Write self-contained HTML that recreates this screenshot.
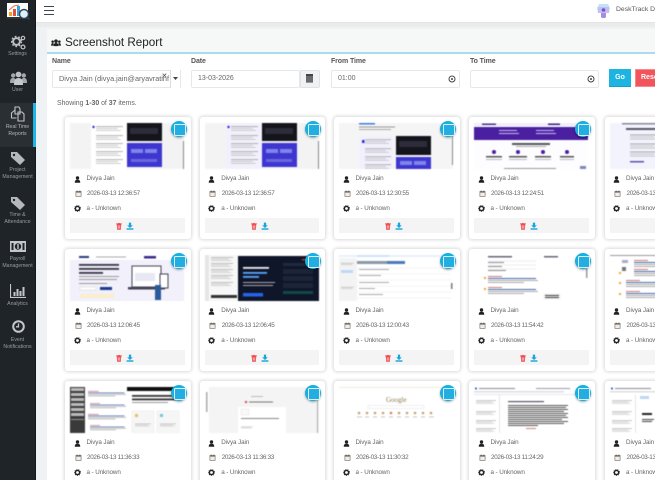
<!DOCTYPE html>
<html><head><meta charset="utf-8"><title>Screenshot Report</title>
<style>
*{box-sizing:border-box}
html,body{margin:0;padding:0;width:655px;height:480px;overflow:hidden;background:#eef2f4;font-family:"Liberation Sans",sans-serif;color:#555}
#root{position:absolute;left:0;top:0;width:655px;height:480px;overflow:hidden;background:#eef2f4;filter:blur(.3px)}
.a{position:absolute}
#side{left:0;top:0;width:36px;height:480px;background:#1f2429;border-right:1px solid #14181b}
.nav{position:absolute;left:0;width:35px;text-align:center;color:#989ca0;font-size:5.2px;line-height:7.4px}
.nav svg{position:absolute}
.nav span{position:absolute;left:0;width:35px;text-align:center}
#hdr{left:36px;top:0;width:619px;height:23px;background:#fff;border-bottom:1px solid #e4e6e6}
#band{left:36px;top:23px;width:619px;height:4px;background:#eaecec}
#main{left:47px;top:29px;width:608px;height:451px;background:#fff}
#ch{left:47px;top:29px;width:608px;height:25px;background:#f6f7f7;border-bottom:2px solid #a9dded}
#title{left:65px;top:35px;font-size:11.7px;line-height:16px;color:#222;font-weight:400;white-space:nowrap}
.lbl{font-size:7px;line-height:10px;top:57px;color:#555;font-weight:700;white-space:nowrap;letter-spacing:-.1px}
.in{top:70px;height:18px;background:#fff;border:1px solid #e4e8ec;border-radius:2px;font-size:7px;line-height:16px;color:#666;padding-left:6px;white-space:nowrap;overflow:hidden}
.card{position:absolute;width:125.5px;height:122px;background:#fff;border-radius:3px;box-shadow:0 0 3px 1px rgba(0,0,0,.15)}
.card>svg.t{position:absolute;left:5px;top:6px;width:114px;height:46px;background:#fff;filter:blur(.45px)}
.ck{position:absolute;left:105.5px;top:4px;width:16px;height:16px;border-radius:50%;background:#18b0de;box-shadow:0 1px 2px rgba(0,0,0,.35)}
.ck:after{content:"";position:absolute;left:3px;top:3px;width:10px;height:10px;border:1px solid #d8f0f8;border-radius:1.5px;background:#22aee0}
.tx{position:absolute;left:21.5px;font-size:6.3px;line-height:9px;color:#666;white-space:nowrap;letter-spacing:-.1px}
.dt{letter-spacing:-.3px}
.ic{position:absolute;left:8.5px;width:7px;height:7px}
.ft{position:absolute;left:5px;top:101px;width:114.5px;height:15px;background:#f4f4f4}
.ft svg{position:absolute;top:3.5px;width:8px;height:8px}
</style></head><body>
<div id="root">
<svg width="0" height="0" style="position:absolute">
<symbol id="u" viewBox="0 0 14 14"><circle cx="7" cy="4" r="3.4" fill="#222"/><path d="M1.5 13.5c0-5 2-6 5.500-6s5.500 1 5.500 6z" fill="#222"/></symbol>
<symbol id="c" viewBox="0 0 14 14"><rect x="1" y="2" width="12" height="11.500" rx="1" fill="#8a8078"/><rect x="2.500" y="5.500" width="9" height="6.500" fill="#f1eee9"/><rect x="3.500" y="1" width="1.500" height="3" fill="#555"/><rect x="9" y="1" width="1.500" height="3" fill="#555"/></symbol>
<symbol id="g" viewBox="0 0 14 14"><circle cx="7" cy="7" r="4.200" fill="none" stroke="#222" stroke-width="2.800"/><circle cx="7" cy="7" r="6" fill="none" stroke="#222" stroke-width="1.600" stroke-dasharray="2 2.200"/></symbol>
<symbol id="d" viewBox="0 0 14 14"><path d="M3 4h8l-.8 9.500H3.800zM2 2.500h3.500l.5-1h2l.5 1H12V4H2z" fill="#ee4b52"/><path d="M5.500 6v5.500M8.500 6v5.500" stroke="#fff" stroke-width="1"/></symbol>
<symbol id="s" viewBox="0 0 14 14"><path d="M5 1h4v5h3L7 10.500 2 6h3z" fill="#17a5dc"/><rect x="1" y="11" width="12" height="2.500" fill="#17a5dc"/></symbol>
<symbol id="l" viewBox="0 0 36 6"><rect width="36" height="1" fill="#999"/><rect y="2.500" width="29" height="1" fill="#bbb"/><rect y="5" width="33" height="1" fill="#bbb"/></symbol>
<symbol id="r" viewBox="0 0 50 8"><rect width="14" height="1" fill="#c77"/><rect y="2" width="48" height="1" fill="#46a"/><rect y="4" width="50" height="1" fill="#aaa"/><rect y="6" width="36" height="1" fill="#aaa"/></symbol>
</svg>

<div id="hdr" class="a"></div><div id="band" class="a"></div>
<div id="main" class="a"></div><div id="ch" class="a"></div>

<div id="side" class="a">
 <svg class="a" style="left:6px;top:2px" width="24" height="19" viewBox="0 0 24 19"><rect x="1" y="1" width="21" height="15" fill="#fff"/><rect x="1" y="15" width="21" height="2" fill="#333"/><rect x="3" y="10" width="3" height="4" fill="#f4a12a"/><rect x="7" y="7" width="3" height="7" fill="#e8503a"/><rect x="11" y="4" width="3" height="10" fill="#3aa0e0"/><path d="M3 8l5-4 5-1" stroke="#e8703a" fill="none"/><circle cx="18" cy="12" r="4.500" fill="#dff3fb" stroke="#345" stroke-width="1.400"/><path d="M21 15l2.500 2.500" stroke="#345" stroke-width="1.500"/></svg>
 <div class="a" style="left:0;top:103px;width:35px;height:44px;background:#2a2f34"></div>
 <div class="a" style="left:33px;top:103px;width:2.500px;height:44px;background:#1fb5e6"></div>

 <div class="nav" style="top:33px;height:30px"><svg style="left:11px;top:2px" width="15" height="15" viewBox="0 0 15 15"><circle cx="5.500" cy="6.500" r="3.400" fill="none" stroke="#bdc0c3" stroke-width="2"/><circle cx="5.500" cy="6.500" r="5" fill="none" stroke="#bdc0c3" stroke-width="1.400" stroke-dasharray="1.800 1.800"/><circle cx="12" cy="3" r="1.700" fill="none" stroke="#bdc0c3" stroke-width="1.200"/><circle cx="12" cy="12" r="1.900" fill="none" stroke="#bdc0c3" stroke-width="1.300"/></svg><span style="top:18px">Settings</span></div>
 <div class="nav" style="top:68px;height:30px"><svg style="left:10px;top:3px" width="17" height="14" viewBox="0 0 17 14"><circle cx="8.500" cy="3.500" r="2.900" fill="#bdc0c3"/><circle cx="3.200" cy="4.500" r="2.200" fill="#a6a9ac"/><circle cx="13.800" cy="4.500" r="2.200" fill="#a6a9ac"/><path d="M0 12c0-4 1-5 3-5s3 1 3 5zM11 12c0-4 1-5 3-5s3 1 3 5z" fill="#a6a9ac"/><path d="M4 14c0-5 1.500-7 4.500-7s4.500 2 4.500 7z" fill="#c6c9cb"/></svg><span style="top:19px">User</span></div>
 <div class="nav" style="top:103px;height:44px"><svg style="left:10px;top:3px" width="15" height="16" viewBox="0 0 15 16"><path d="M5 1h4l1 2v5H5zM5 4L1.500 7v5h5" fill="none" stroke="#c0c3c6" stroke-width="1.100"/><path d="M8 6h4l2 2v7H8z" fill="none" stroke="#c0c3c6" stroke-width="1.100"/></svg><span style="top:21px;color:#b5b8bb">Real Time<br>Reports</span></div>
 <div class="nav" style="top:149px;height:34px"><svg style="left:10px;top:2px" width="16" height="15" viewBox="0 0 16 15"><path d="M1 1h6l8 8-5 5-9-8z" fill="#b6b9bc"/><circle cx="4" cy="4" r="1.200" fill="#1f2429"/></svg><span style="top:18px">Project<br>Management</span></div>
 <div class="nav" style="top:194px;height:34px"><svg style="left:10px;top:2px" width="16" height="15" viewBox="0 0 16 15"><path d="M1 1h6l8 8-5 5-9-8z" fill="#b6b9bc"/><circle cx="4" cy="4" r="1.200" fill="#1f2429"/></svg><span style="top:18px">Time &amp;<br>Attendance</span></div>
 <div class="nav" style="top:238px;height:34px"><svg style="left:10px;top:3px" width="16" height="12" viewBox="0 0 16 12"><rect width="16" height="11" fill="#c4c7c9"/><circle cx="8" cy="5.500" r="3.200" fill="#1f2429"/><rect x="7.300" y="3" width="1.400" height="5" fill="#c4c7c9"/><rect x="1.500" y="2" width="2" height="7" fill="#1f2429"/><rect x="12.500" y="2" width="2" height="7" fill="#1f2429"/></svg><span style="top:18px">Payroll<br>Management</span></div>
 <div class="nav" style="top:284px;height:24px"><svg style="left:10px;top:0" width="16" height="14" viewBox="0 0 16 14"><path d="M.5 0v13.500H16" fill="none" stroke="#c4c7c9" stroke-width="1.200"/><rect x="3.500" y="8" width="2" height="4" fill="#c4c7c9"/><rect x="6.500" y="5" width="2" height="7" fill="#c4c7c9"/><rect x="9.500" y="7" width="2" height="5" fill="#c4c7c9"/><rect x="12.500" y="3" width="2" height="9" fill="#c4c7c9"/></svg><span style="top:17px">Analytics</span></div>
 <div class="nav" style="top:320px;height:34px"><svg style="left:11.500px;top:0" width="13" height="13" viewBox="0 0 13 13"><circle cx="6.500" cy="6.500" r="5.300" fill="none" stroke="#c4c7c9" stroke-width="2"/><path d="M6.500 3.500v3.300H4" fill="none" stroke="#c4c7c9" stroke-width="1.300"/></svg><span style="top:16.500px">Event<br>Notifications</span></div>
</div>

<div class="a" style="left:44px;top:6px;width:9.500px;height:9px;border-top:1.800px solid #3c4650;border-bottom:1.800px solid #3c4650"></div>
<div class="a" style="left:44px;top:9.600px;width:9.500px;height:1.800px;background:#3c4650"></div>

<svg class="a" style="left:596px;top:2px" width="15" height="17" viewBox="0 0 15 17"><path d="M3 2h9l2 4-1 5H2L1 6z" fill="#bfe3f7"/><rect x="2" y="5" width="11" height="6" fill="#c9bdf0"/><path d="M5 11h5v4l-1 1H6l-1-1z" fill="#a78be8"/><circle cx="7.500" cy="8" r="1.800" fill="#6a55d8"/></svg>
<div class="a" style="left:616px;top:5px;font-size:6.8px;line-height:10px;color:#555;white-space:nowrap">DeskTrack Demo</div>

<svg class="a" style="left:51px;top:38px" width="10" height="9" viewBox="0 0 11 9"><circle cx="5.500" cy="3" r="2" fill="#222"/><circle cx="1.800" cy="3.500" r="1.400" fill="#222"/><circle cx="9.200" cy="3.500" r="1.400" fill="#222"/><path d="M0 8c0-2 1-3 2-3s1 1 1 3zM8 8c0-2 0-3 1-3s2 1 2 3zM3 8.500c0-3 1-3.500 2.500-3.500S8 5.500 8 8.500z" fill="#222"/></svg>
<div id="title" class="a">Screenshot Report</div>

<div class="a lbl" style="left:52px">Name</div>
<div class="a lbl" style="left:191px">Date</div>
<div class="a lbl" style="left:331px">From Time</div>
<div class="a lbl" style="left:470px">To Time</div>

<div class="a in" style="left:52px;width:129px;font-size:7.3px">Divya Jain (divya.jain@aryavratinf</div>
<div class="a" style="left:161.500px;top:73px;font-size:7px;line-height:8px;color:#444">&#10005;</div>
<div class="a" style="left:169.500px;top:70px;width:11px;height:18px;background:#fff;border-left:1px solid #d8dce0"></div>
<div class="a" style="left:180px;top:70px;width:1px;height:18px;background:#e4e8ec"></div>
<svg class="a" style="left:173px;top:77px" width="5" height="3"><path d="M0 0h5L2.500 3z" fill="#444"/></svg>

<div class="a in" style="left:191px;width:109px">13-03-2026</div>
<div class="a" style="left:300px;top:70px;width:20px;height:18px;background:#f0f1f2;border:1px solid #e0e2e4;border-radius:0 2px 2px 0"></div>
<svg class="a" style="left:306px;top:74px" width="7" height="9"><rect width="7" height="8.500" fill="#444"/><path d="M0 3h7M0 5h7M0 7h7" stroke="#ddd" stroke-width=".6"/></svg>

<div class="a in" style="left:331px;width:129px">01:00</div>
<svg class="a" style="left:448px;top:74.500px" width="8" height="8" viewBox="0 0 8 8"><circle cx="4" cy="4" r="3" fill="none" stroke="#444" stroke-width="1"/><circle cx="4" cy="4" r="1" fill="#444"/></svg>
<div class="a in" style="left:470px;width:129px"></div>
<svg class="a" style="left:587px;top:74.500px" width="8" height="8" viewBox="0 0 8 8"><circle cx="4" cy="4" r="3" fill="none" stroke="#444" stroke-width="1"/><circle cx="4" cy="4" r="1" fill="#444"/></svg>

<div class="a" style="left:609px;top:69px;width:22px;height:18px;background:#1eb4e2;border-bottom:1px solid #18a0ca;color:#fff;font-size:7px;line-height:17px;text-align:center;font-weight:700">Go</div>
<div class="a" style="left:635px;top:69px;width:30px;height:18px;background:#f2545b;border:1px solid #f78a8f;color:#fff;font-size:7px;line-height:16px;padding-left:5px;font-weight:700;white-space:nowrap">Reset</div>

<div class="a" style="left:57px;top:99px;font-size:6.900px;line-height:10px;color:#666;white-space:nowrap">Showing <b>1-30</b> of <b>37</b> items.</div>

<!-- ROW 1 -->
<div class="card" style="left:65px;top:117px"><svg class="t" viewBox="0 0 114 46"><rect width="114" height="46" fill="#f3f3f3"/><rect x="21" width="36" height="46" fill="#fff"/><rect x="57" y="0" width="35" height="18" fill="#14141c"/><rect x="57" y="20" width="35" height="24" fill="#3f36d0"/><rect x="60" y="5" width="28" height="6" fill="#2c2c3a"/><rect x="61" y="26" width="12" height="4" fill="#7e86ea"/><rect x="75" y="26" width="12" height="4" fill="#7e86ea"/><rect x="61" y="36" width="26" height="3" fill="#6a66e0"/><circle cx="23.500" cy="4" r="1.200" fill="#2a2ae0"/><use href="#l" x="26" y="3" width="27" height="5"/><use href="#l" x="26" y="12" width="27" height="5"/><use href="#l" x="26" y="20" width="27" height="5"/><use href="#l" x="26" y="28" width="27" height="5"/><use href="#l" x="26" y="36" width="27" height="5"/><rect x="113" y="18" width="1" height="28" fill="#888"/></svg><div class="ck"></div>
<svg class="ic" style="top:58.500px"><use href="#u" width="7" height="7"/></svg><div class="tx" style="top:57px">Divya Jain</div>
<svg class="ic" style="top:73px;left:9.500px"><use href="#c" width="7" height="7"/></svg><div class="tx dt" style="top:72px;left:22px">2026-03-13 12:36:57</div>
<svg class="ic" style="top:87.500px"><use href="#g" width="7" height="7"/></svg><div class="tx" style="top:87px">a - Unknown</div>
<div class="ft"><svg style="left:45px"><use href="#d" width="8" height="8"/></svg><svg style="left:56px"><use href="#s" width="8" height="8"/></svg></div></div>

<div class="card" style="left:199.700px;top:117px"><svg class="t" viewBox="0 0 114 46"><rect width="114" height="46" fill="#f3f3f3"/><rect x="21" width="36" height="46" fill="#f3f0fd"/><rect x="57" y="0" width="35" height="18" fill="#14141c"/><rect x="57" y="20" width="35" height="24" fill="#3f36d0"/><rect x="60" y="5" width="28" height="6" fill="#2c2c3a"/><rect x="61" y="26" width="12" height="4" fill="#7e86ea"/><rect x="75" y="26" width="12" height="4" fill="#7e86ea"/><rect x="61" y="36" width="26" height="3" fill="#6a66e0"/><circle cx="23.500" cy="4" r="1.200" fill="#2a2ae0"/><use href="#l" x="26" y="3" width="27" height="5"/><use href="#l" x="26" y="12" width="27" height="5"/><use href="#l" x="26" y="20" width="27" height="5"/><use href="#l" x="26" y="28" width="27" height="5"/><use href="#l" x="26" y="36" width="27" height="5"/><rect x="113" y="18" width="1" height="28" fill="#888"/></svg><div class="ck"></div>
<svg class="ic" style="top:58.500px"><use href="#u" width="7" height="7"/></svg><div class="tx" style="top:57px">Divya Jain</div>
<svg class="ic" style="top:73px;left:9.500px"><use href="#c" width="7" height="7"/></svg><div class="tx dt" style="top:72px;left:22px">2026-03-13 12:36:57</div>
<svg class="ic" style="top:87.500px"><use href="#g" width="7" height="7"/></svg><div class="tx" style="top:87px">a - Unknown</div>
<div class="ft"><svg style="left:45px"><use href="#d" width="8" height="8"/></svg><svg style="left:56px"><use href="#s" width="8" height="8"/></svg></div></div>

<div class="card" style="left:334px;top:117px"><svg class="t" viewBox="0 0 114 46"><rect width="114" height="46" fill="#f5f5f5"/><rect x="20" y="0" width="16" height="1.500" fill="#3a7ae0"/><rect x="20" y="3.500" width="36" height="1" fill="#999"/><rect x="20" y="6" width="32" height="1" fill="#aaa"/><rect x="20" y="13" width="34" height="33" fill="#f3f0fd"/><rect x="57" y="13" width="35" height="19" fill="#14141c"/><rect x="57" y="34" width="35" height="12" fill="#3f36d0"/><rect x="61" y="38" width="12" height="4" fill="#7e86ea"/><rect x="75" y="38" width="12" height="4" fill="#7e86ea"/><rect x="60" y="18" width="28" height="6" fill="#2c2c3a"/><rect x="23" y="17" width="2.500" height="3" fill="#2a2ae0"/><use href="#l" x="26" y="16" width="26" height="5"/><use href="#l" x="26" y="25" width="26" height="5"/><use href="#l" x="26" y="33" width="26" height="5"/><use href="#l" x="26" y="41" width="26" height="5"/><rect x="113" y="12" width="1" height="30" fill="#888"/></svg><div class="ck"></div>
<svg class="ic" style="top:58.500px"><use href="#u" width="7" height="7"/></svg><div class="tx" style="top:57px">Divya Jain</div>
<svg class="ic" style="top:73px;left:9.500px"><use href="#c" width="7" height="7"/></svg><div class="tx dt" style="top:72px;left:22px">2026-03-13 12:30:55</div>
<svg class="ic" style="top:87.500px"><use href="#g" width="7" height="7"/></svg><div class="tx" style="top:87px">a - Unknown</div>
<div class="ft"><svg style="left:45px"><use href="#d" width="8" height="8"/></svg><svg style="left:56px"><use href="#s" width="8" height="8"/></svg></div></div>

<div class="card" style="left:469px;top:117px"><svg class="t" viewBox="0 0 114 46"><rect width="114" height="46" fill="#fdfdff"/><rect width="114" height="3" fill="#f0eef8"/><rect x="8" y="0.500" width="14" height="1.500" fill="#443388"/><rect x="74" y="0.500" width="12" height="1.500" fill="#3a1c8c"/><rect y="4" width="114" height="13" fill="#4a1fa0"/><rect x="25" y="7" width="18" height="1" fill="#cbbdf0"/><rect x="25" y="10" width="20" height="1" fill="#cbbdf0"/><rect x="62" y="7" width="18" height="1" fill="#cbbdf0"/><rect x="62" y="10" width="20" height="1" fill="#cbbdf0"/><rect x="38" y="20" width="38" height="2" fill="#555"/><rect x="42" y="23" width="30" height="1" fill="#aaa"/><circle cx="20" cy="29" r="2" fill="#4a1fa0"/><circle cx="44" cy="29" r="2" fill="#4a1fa0"/><circle cx="69" cy="29" r="2" fill="#4a1fa0"/><circle cx="93" cy="29" r="2" fill="#4a1fa0"/><rect x="12" y="33" width="16" height="1.500" fill="#555"/><rect x="35" y="33" width="18" height="1.500" fill="#555"/><rect x="61" y="33" width="16" height="1.500" fill="#555"/><rect x="86" y="33" width="14" height="1.500" fill="#555"/><rect x="12" y="36" width="16" height="1" fill="#bbb"/><rect x="35" y="36" width="18" height="1" fill="#bbb"/><rect x="61" y="36" width="16" height="1" fill="#bbb"/><rect x="86" y="36" width="14" height="1" fill="#bbb"/><rect x="30" y="45" width="52" height="1" fill="#999"/><rect x="106" y="43" width="6" height="3" fill="#7a88bb"/></svg><div class="ck"></div>
<svg class="ic" style="top:58.500px"><use href="#u" width="7" height="7"/></svg><div class="tx" style="top:57px">Divya Jain</div>
<svg class="ic" style="top:73px;left:9.500px"><use href="#c" width="7" height="7"/></svg><div class="tx dt" style="top:72px;left:22px">2026-03-13 12:24:51</div>
<svg class="ic" style="top:87.500px"><use href="#g" width="7" height="7"/></svg><div class="tx" style="top:87px">a - Unknown</div>
<div class="ft"><svg style="left:45px"><use href="#d" width="8" height="8"/></svg><svg style="left:56px"><use href="#s" width="8" height="8"/></svg></div></div>

<div class="card" style="left:604.500px;top:117px"><svg class="t" viewBox="0 0 114 46"><rect width="114" height="46" fill="#f3f3fd"/><rect x="12" y="0" width="34" height="1.500" fill="#889"/><rect x="16" y="5" width="30" height="2" fill="#556"/><use href="#l" x="20" y="11" width="30" height="6"/><use href="#l" x="20" y="20" width="30" height="6"/><use href="#l" x="20" y="28" width="30" height="6"/><rect x="20" y="38" width="14" height="1.500" fill="#55a"/></svg>
<svg class="ic" style="top:58.500px"><use href="#u" width="7" height="7"/></svg><div class="tx" style="top:57px">Divya Jain</div>
<svg class="ic" style="top:73px;left:9.500px"><use href="#c" width="7" height="7"/></svg><div class="tx dt" style="top:72px;left:22px">2026-03-13 12:18:49</div>
<svg class="ic" style="top:87.500px"><use href="#g" width="7" height="7"/></svg><div class="tx" style="top:87px">a - Unknown</div>
<div class="ft"></div></div>

<!-- ROW 2 -->
<div class="card" style="left:65px;top:249px"><svg class="t" viewBox="0 0 114 46"><rect width="114" height="46" fill="#f1f0fb"/><rect width="114" height="5" fill="#fff"/><rect x="9" y="1" width="10" height="2" fill="#2a3a80"/><rect x="26" y="1.500" width="30" height="1" fill="#aaa"/><rect x="74" y="1" width="12" height="2.500" fill="#3a2a8c"/><rect x="9" y="9" width="40" height="1.800" fill="#334"/><rect x="9" y="13" width="40" height="1.800" fill="#334"/><rect x="9" y="17" width="24" height="1.800" fill="#334"/><rect x="9" y="21" width="40" height="1" fill="#999"/><rect x="9" y="24" width="38" height="1" fill="#999"/><rect x="9" y="28" width="28" height="1" fill="#999"/><rect x="10" y="32" width="16" height="3" fill="#fff" stroke="#ccc" stroke-width=".4"/><rect x="30" y="32" width="12" height="3" fill="#1c3a8c"/><rect x="10" y="39" width="34" height="4" fill="#fbeecb"/><rect x="62" y="11" width="29" height="21" fill="#fff" stroke="#445" stroke-width="1"/><rect x="58" y="32" width="37" height="2.500" fill="#445"/><rect x="65" y="18" width="20" height="8" fill="#e8e8f4"/><rect x="90" y="19" width="8" height="14" fill="#fff" stroke="#445"/><rect x="85" y="30" width="6" height="15" fill="#2a5a9c"/></svg><div class="ck"></div>
<svg class="ic" style="top:58.500px"><use href="#u" width="7" height="7"/></svg><div class="tx" style="top:57px">Divya Jain</div>
<svg class="ic" style="top:73px;left:9.500px"><use href="#c" width="7" height="7"/></svg><div class="tx dt" style="top:72px;left:22px">2026-03-13 12:06:45</div>
<svg class="ic" style="top:87.500px"><use href="#g" width="7" height="7"/></svg><div class="tx" style="top:87px">a - Unknown</div>
<div class="ft"><svg style="left:45px"><use href="#d" width="8" height="8"/></svg><svg style="left:56px"><use href="#s" width="8" height="8"/></svg></div></div>

<div class="card" style="left:199.700px;top:249px"><svg class="t" viewBox="0 0 114 46"><rect width="114" height="46" fill="#f7f7f7"/><rect y="0" width="4" height="46" fill="#e6e6e6"/><use href="#l" x="6" y="2" width="22" height="4"/><use href="#l" x="6" y="8" width="22" height="4"/><use href="#l" x="6" y="14" width="22" height="4"/><use href="#l" x="6" y="20" width="22" height="4"/><use href="#l" x="6" y="27" width="22" height="4"/><rect x="6" y="40" width="26" height="3" fill="#333"/><rect x="33" y="1" width="81" height="45" fill="#10162a"/><rect x="38" y="12" width="26" height="1.800" fill="#eee"/><rect x="38" y="17" width="24" height="1.800" fill="#57a6ff"/><rect x="38" y="21" width="16" height="1.800" fill="#57a6ff"/><rect x="38" y="27" width="32" height="1" fill="#aaa"/><rect x="38" y="30" width="30" height="1" fill="#aaa"/><rect x="38" y="38" width="20" height="3.500" fill="#2563eb"/><rect x="78" y="8" width="30" height="3" fill="#1e2a40"/><rect x="78" y="14" width="30" height="5" fill="#1c2438"/><rect x="78" y="21" width="30" height="5" fill="#1c2438"/><rect x="78" y="28" width="30" height="5" fill="#1c2438"/><rect x="78" y="36" width="30" height="3" fill="#0f4a44"/><rect x="97" y="4" width="6" height="1.500" fill="#c33"/></svg><div class="ck"></div>
<svg class="ic" style="top:58.500px"><use href="#u" width="7" height="7"/></svg><div class="tx" style="top:57px">Divya Jain</div>
<svg class="ic" style="top:73px;left:9.500px"><use href="#c" width="7" height="7"/></svg><div class="tx dt" style="top:72px;left:22px">2026-03-13 12:06:45</div>
<svg class="ic" style="top:87.500px"><use href="#g" width="7" height="7"/></svg><div class="tx" style="top:87px">a - Unknown</div>
<div class="ft"><svg style="left:45px"><use href="#d" width="8" height="8"/></svg><svg style="left:56px"><use href="#s" width="8" height="8"/></svg></div></div>

<div class="card" style="left:334px;top:249px"><svg class="t" viewBox="0 0 114 46"><rect width="114" height="46" fill="#fff"/><rect width="114" height="2" fill="#e8f0fb"/><rect x="18" y="0" width="32" height="2" fill="#cfe2f8"/><rect y="3" width="18" height="43" fill="#f3f3f3"/><rect x="18" y="6" width="48" height="3" fill="#8899a8"/><rect x="48" y="6" width="18" height="3" fill="#4a7ab8"/><rect x="2" y="15" width="12" height="3" fill="#bcd8f4"/><use href="#l" x="2" y="5" width="13" height="8"/><use href="#l" x="2" y="22" width="13" height="22"/><path d="M18 13h94M18 19h94M18 25h94M18 31h94M18 37h94M18 43h94" stroke="#e8e8e8" stroke-width=".6"/><rect x="20" y="14" width="30" height="1" fill="#aaa"/><rect x="20" y="20" width="22" height="1" fill="#aaa"/><rect x="20" y="27" width="30" height="1" fill="#aaa"/><rect x="20" y="33" width="16" height="1" fill="#aaa"/><rect x="20" y="39" width="24" height="1" fill="#aaa"/><rect x="112" y="28" width="1.500" height="6" fill="#777"/></svg><div class="ck"></div>
<svg class="ic" style="top:58.500px"><use href="#u" width="7" height="7"/></svg><div class="tx" style="top:57px">Divya Jain</div>
<svg class="ic" style="top:73px;left:9.500px"><use href="#c" width="7" height="7"/></svg><div class="tx dt" style="top:72px;left:22px">2026-03-13 12:00:43</div>
<svg class="ic" style="top:87.500px"><use href="#g" width="7" height="7"/></svg><div class="tx" style="top:87px">a - Unknown</div>
<div class="ft"><svg style="left:45px"><use href="#d" width="8" height="8"/></svg><svg style="left:56px"><use href="#s" width="8" height="8"/></svg></div></div>

<div class="card" style="left:469px;top:249px"><svg class="t" viewBox="0 0 114 46"><rect width="114" height="46" fill="#fff"/><rect x="14" y="1" width="24" height="1.500" fill="#667"/><rect x="70" y="1" width="14" height="1.500" fill="#667"/><path d="M14 6h48M14 10h48M14 14h48" stroke="#ddd" stroke-width=".5"/><rect x="14" y="7" width="16" height="1" fill="#888"/><rect x="14" y="11" width="14" height="1" fill="#888"/><rect x="14" y="15" width="18" height="1" fill="#888"/><rect x="10" y="22" width="2" height="2" fill="#f0a030"/><use href="#r" x="14" y="21" width="50" height="8"/><rect x="10" y="33" width="2" height="2" fill="#f0a030"/><use href="#r" x="14" y="32" width="50" height="8"/><rect x="70" y="39" width="16" height="5" fill="#fff" stroke="#ddd" stroke-width=".4"/><rect x="71" y="40" width="14" height="1" fill="#333"/><rect x="71" y="42" width="14" height="1" fill="#333"/><rect x="112" y="13" width="1.500" height="10" fill="#999"/></svg><div class="ck"></div>
<svg class="ic" style="top:58.500px"><use href="#u" width="7" height="7"/></svg><div class="tx" style="top:57px">Divya Jain</div>
<svg class="ic" style="top:73px;left:9.500px"><use href="#c" width="7" height="7"/></svg><div class="tx dt" style="top:72px;left:22px">2026-03-13 11:54:42</div>
<svg class="ic" style="top:87.500px"><use href="#g" width="7" height="7"/></svg><div class="tx" style="top:87px">a - Unknown</div>
<div class="ft"><svg style="left:45px"><use href="#d" width="8" height="8"/></svg><svg style="left:56px"><use href="#s" width="8" height="8"/></svg></div></div>

<div class="card" style="left:604.500px;top:249px"><svg class="t" viewBox="0 0 114 46"><rect width="114" height="46" fill="#fff"/><rect width="114" height="1" fill="#999"/><rect x="12" y="5" width="6" height="3" fill="#aac"/><rect x="12" y="12" width="4" height="4" fill="#777"/><use href="#r" x="24" y="4" width="50" height="10"/><use href="#r" x="24" y="14" width="50" height="8"/><rect x="9" y="17" width="2" height="2" fill="#f0a030"/><use href="#r" x="16" y="25" width="50" height="8"/><rect x="9" y="27" width="2" height="2" fill="#f0a030"/><use href="#r" x="16" y="36" width="50" height="8"/><rect x="9" y="38" width="2" height="2" fill="#f0a030"/></svg>
<svg class="ic" style="top:58.500px"><use href="#u" width="7" height="7"/></svg><div class="tx" style="top:57px">Divya Jain</div>
<svg class="ic" style="top:73px;left:9.500px"><use href="#c" width="7" height="7"/></svg><div class="tx dt" style="top:72px;left:22px">2026-03-13 11:48:40</div>
<svg class="ic" style="top:87.500px"><use href="#g" width="7" height="7"/></svg><div class="tx" style="top:87px">a - Unknown</div>
<div class="ft"></div></div>

<!-- ROW 3 -->
<div class="card" style="left:65px;top:381px"><svg class="t" viewBox="0 0 114 46"><rect width="114" height="46" fill="#fff"/><rect width="15" height="46" fill="#3a3a3a"/><rect x="1" y="1" width="13" height="3" fill="#bbb"/><rect x="1" y="6" width="13" height="3" fill="#bbb"/><rect x="1" y="11" width="13" height="3" fill="#bbb"/><rect x="1" y="16" width="13" height="3" fill="#bbb"/><rect x="1" y="21" width="13" height="3" fill="#bbb"/><rect x="1" y="26" width="13" height="3" fill="#bbb"/><rect x="1" y="32" width="13" height="1" fill="#999"/><use href="#r" x="18" y="2" width="38" height="10"/><use href="#r" x="20" y="14" width="36" height="10"/><use href="#r" x="18" y="26" width="38" height="8"/><use href="#r" x="20" y="37" width="36" height="8"/><rect x="57" y="0" width="57" height="4" fill="#111"/><rect x="62" y="8" width="46" height="1.800" fill="#333"/><rect x="62" y="11.500" width="44" height="1.800" fill="#333"/><rect x="62" y="15" width="36" height="1" fill="#999"/><rect x="62" y="24" width="22" height="22" fill="#f6f6f6" stroke="#e8e8e8" stroke-width=".5"/><rect x="87" y="24" width="22" height="22" fill="#f6f6f6" stroke="#e8e8e8" stroke-width=".5"/><rect x="65" y="27" width="3" height="3" fill="#e8c060"/><rect x="90" y="27" width="3" height="3" fill="#70c8d8"/><use href="#l" x="65" y="33" width="16" height="10"/><use href="#l" x="90" y="33" width="16" height="10"/></svg><div class="ck"></div>
<svg class="ic" style="top:58.500px"><use href="#u" width="7" height="7"/></svg><div class="tx" style="top:57px">Divya Jain</div>
<svg class="ic" style="top:73px;left:9.500px"><use href="#c" width="7" height="7"/></svg><div class="tx dt" style="top:72px;left:22px">2026-03-13 11:36:33</div>
<svg class="ic" style="top:87.500px"><use href="#g" width="7" height="7"/></svg><div class="tx" style="top:87px">a - Unknown</div>
</div>

<div class="card" style="left:199.700px;top:381px"><svg class="t" viewBox="0 0 114 46"><rect width="114" height="46" fill="#f4f4f4"/><rect width="4" height="46" fill="#fff"/><rect x="1" y="5" width="1.500" height="20" fill="#aaa"/><rect x="112" y="0" width="1" height="46" fill="#aaa"/><rect x="46" y="9" width="12" height="1" fill="#bbb"/><rect x="40" y="14" width="2" height="2" fill="#d44"/><rect x="44" y="14.500" width="24" height="1" fill="#777"/><rect x="33" y="20" width="48" height="26" fill="#fff"/><rect x="36" y="22" width="8" height="6" fill="#f8f8f8" stroke="#ddd" stroke-width=".4"/><rect x="36" y="31" width="38" height="1" fill="#888"/><use href="#l" x="36" y="35" width="12" height="11"/></svg><div class="ck"></div>
<svg class="ic" style="top:58.500px"><use href="#u" width="7" height="7"/></svg><div class="tx" style="top:57px">Divya Jain</div>
<svg class="ic" style="top:73px;left:9.500px"><use href="#c" width="7" height="7"/></svg><div class="tx dt" style="top:72px;left:22px">2026-03-13 11:36:33</div>
<svg class="ic" style="top:87.500px"><use href="#g" width="7" height="7"/></svg><div class="tx" style="top:87px">a - Unknown</div>
</div>

<div class="card" style="left:334px;top:381px"><svg class="t" viewBox="0 0 114 46"><rect width="114" height="46" fill="#fff"/><rect width="114" height=".6" fill="#e8e0c8"/><text x="47" y="15" font-family="Liberation Serif,serif" font-size="7" fill="#8a7a50">Google</text><rect x="29" y="18.500" width="56" height="3" fill="#fff" stroke="#ddd" stroke-width=".5"/><g fill="#c9a070"><circle cx="20" cy="26" r="1.300"/><circle cx="28" cy="26" r="1.300"/><circle cx="36" cy="26" r="1.300"/><circle cx="44" cy="26" r="1.300"/><circle cx="52" cy="26" r="1.300" fill="#e08040"/><circle cx="60" cy="26" r="1.300"/><circle cx="68" cy="26" r="1.300"/><circle cx="76" cy="26" r="1.300"/><circle cx="84" cy="26" r="1.300"/><circle cx="92" cy="26" r="1.300"/></g><g fill="#bbb"><rect x="18" y="29.500" width="5" height=".8"/><rect x="26" y="29.500" width="4" height=".8"/><rect x="34" y="29.500" width="4" height=".8"/><rect x="42" y="29.500" width="4" height=".8"/><rect x="50" y="29.500" width="4" height=".8"/><rect x="58" y="29.500" width="4" height=".8"/><rect x="66" y="29.500" width="4" height=".8"/><rect x="74" y="29.500" width="4" height=".8"/><rect x="82" y="29.500" width="4" height=".8"/><rect x="90" y="29.500" width="5" height=".8"/></g></svg><div class="ck"></div>
<svg class="ic" style="top:58.500px"><use href="#u" width="7" height="7"/></svg><div class="tx" style="top:57px">Divya Jain</div>
<svg class="ic" style="top:73px;left:9.500px"><use href="#c" width="7" height="7"/></svg><div class="tx dt" style="top:72px;left:22px">2026-03-13 11:30:32</div>
<svg class="ic" style="top:87.500px"><use href="#g" width="7" height="7"/></svg><div class="tx" style="top:87px">a - Unknown</div>
</div>

<div class="card" style="left:469px;top:381px"><svg class="t" viewBox="0 0 114 46"><rect width="114" height="46" fill="#fff"/><circle cx="2" cy="1.500" r="1" fill="#24c"/><rect x="5" y="1" width="36" height="1" fill="#889"/><rect x="62" y="1" width="34" height="1" fill="#99a"/><rect x="0" y="4" width="90" height="1.500" fill="#ddd"/><rect x="0" y="7" width="114" height="1" fill="#e6e6f0"/><rect x="25" y="8" width="1" height="38" fill="#e4e4e4"/><use href="#l" x="2" y="12" width="20" height="6"/><use href="#l" x="2" y="22" width="20" height="8"/><use href="#l" x="2" y="32" width="20" height="6"/><use href="#l" x="2" y="40" width="20" height="6"/><rect x="34" y="14" width="36" height="1.200" fill="#556"/><g fill="#555"><rect x="34" y="18" width="60" height="1"/><rect x="34" y="20" width="58" height="1"/><rect x="34" y="22" width="60" height="1"/><rect x="34" y="24" width="56" height="1"/><rect x="34" y="26" width="60" height="1"/><rect x="34" y="28" width="58" height="1"/><rect x="34" y="30" width="60" height="1"/><rect x="34" y="32" width="54" height="1"/><rect x="34" y="34" width="60" height="1"/><rect x="34" y="36" width="56" height="1"/><rect x="34" y="38" width="30" height="1"/></g><rect x="52" y="41" width="10" height="1" fill="#d08070"/></svg><div class="ck"></div>
<svg class="ic" style="top:58.500px"><use href="#u" width="7" height="7"/></svg><div class="tx" style="top:57px">Divya Jain</div>
<svg class="ic" style="top:73px;left:9.500px"><use href="#c" width="7" height="7"/></svg><div class="tx dt" style="top:72px;left:22px">2026-03-13 11:24:29</div>
<svg class="ic" style="top:87.500px"><use href="#g" width="7" height="7"/></svg><div class="tx" style="top:87px">a - Unknown</div>
</div>

<div class="card" style="left:604.500px;top:381px"><svg class="t" viewBox="0 0 114 46"><rect width="114" height="46" fill="#fff"/><circle cx="2" cy="1.500" r="1" fill="#24c"/><rect x="5" y="1" width="36" height="1" fill="#889"/><rect x="0" y="4" width="90" height="1.500" fill="#ddd"/><rect x="25" y="8" width="1" height="38" fill="#e4e4e4"/><use href="#l" x="2" y="12" width="20" height="6"/><use href="#l" x="2" y="22" width="20" height="8"/><use href="#l" x="2" y="32" width="20" height="6"/><use href="#l" x="2" y="40" width="20" height="6"/><rect x="30" y="9" width="9" height="3" fill="#bcd8f4"/><rect x="32" y="26" width="10" height="2" fill="#222"/><rect x="32" y="32" width="12" height="1" fill="#444"/><rect x="32" y="34" width="10" height="1" fill="#444"/></svg>
<svg class="ic" style="top:58.500px"><use href="#u" width="7" height="7"/></svg><div class="tx" style="top:57px">Divya Jain</div>
<svg class="ic" style="top:73px;left:9.500px"><use href="#c" width="7" height="7"/></svg><div class="tx dt" style="top:72px;left:22px">2026-03-13 11:18:27</div>
<svg class="ic" style="top:87.500px"><use href="#g" width="7" height="7"/></svg><div class="tx" style="top:87px">a - Unknown</div>
</div>
</div>
</body></html>
